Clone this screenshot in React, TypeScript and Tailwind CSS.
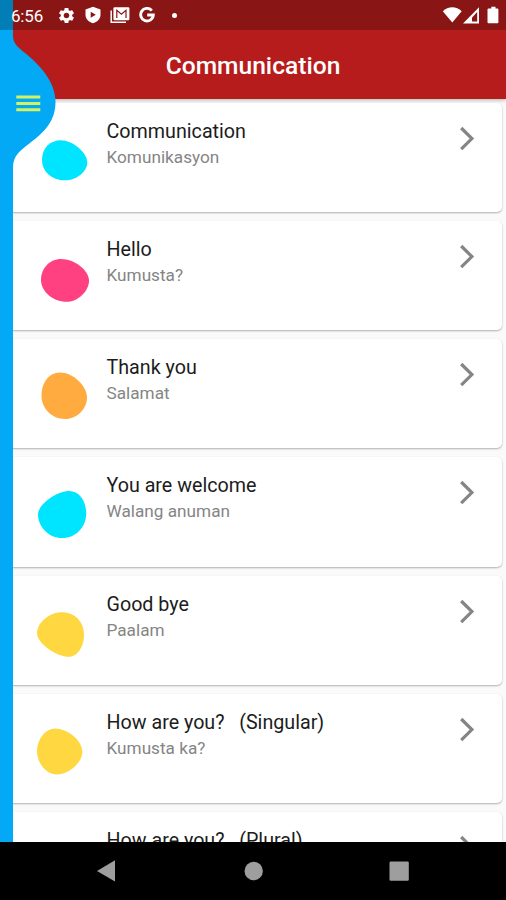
import { MdSettings } from "react-icons/md"

type Phrase = {
  title: string
  translation?: string
  color: string
  blob: string
}

const phrases: Phrase[] = [
  {
    title: "Communication",
    translation: "Komunikasyon",
    color: "#00e5ff",
    blob: "M42 57C42 45 50 37.3 61 37.3C72 37.3 87.3 49 87.3 60C87.3 68 77 77.3 65 77.3C51 77.3 42 68 42 57Z",
  },
  {
    title: "Hello",
    translation: "Kumusta?",
    color: "#ff4081",
    blob: "M41 58.8C41 47 50 38.1 61 38.1C74 38.1 89 49 89 59.8C89 70 78 80.8 67 80.8C52 80.8 41 70 41 58.8Z",
  },
  {
    title: "Thank you",
    translation: "Salamat",
    color: "#ffab40",
    blob: "M41.5 56.6C41.5 45 48 33.6 60 33.6C73 33.6 87 47 87 58.5C87 70 77 80 65 80C52 80 41.5 70 41.5 56.6Z",
  },
  {
    title: "You are welcome",
    translation: "Walang anuman",
    color: "#00e5ff",
    blob: "M38 57.5C38 47 57 33.9 69 33.9C80 33.9 86.2 45 86.2 56.5C86.2 70 76 81.1 62 81.1C49 81.1 38 70 38 57.5Z",
  },
  {
    title: "Good bye",
    translation: "Paalam",
    color: "#ffd740",
    blob: "M37 57C37 47 49 36.2 62 36.2C75 36.2 84 46 84 59C84 71 77 80.8 69 80.8C57 80.8 37 68 37 57Z",
  },
  {
    title: "How are you?   (Singular)",
    translation: "Kumusta ka?",
    color: "#ffd740",
    blob: "M37 57C37 46 45 34.5 55 34.5C67 34.5 82.3 46 82.3 58C82.3 69 68 80.5 57 80.5C46 80.5 37 69 37 57Z",
  },
  {
    title: "How are you?   (Plural)",
    color: "#ffd740",
    blob: "M37 57C37 46 45 34.5 55 34.5C67 34.5 82.3 46 82.3 58C82.3 69 68 80.5 57 80.5C46 80.5 37 69 37 57Z",
  },
]

function StatusBar() {
  return (
    <div className="absolute inset-x-0 top-0 z-20 flex h-[30px] items-center bg-black/25 pl-[11px] text-white">
      <span className="w-[33px] pt-[2px] text-[17px] leading-[28px] tracking-[-0.2px]">6:56</span>
      <MdSettings className="ml-[13px] size-[19px]" />
      <svg className="ml-[9px] h-[18px] w-4" viewBox="0 0 16 18">
        <path
          d="M8 .8L15.5 3.6V9C15.5 13 12 16 8 17.2C4 16 .5 13 .5 9V3.6ZM5.7 5.8V11.8L10.8 8.8Z"
          fill="currentColor"
          fillRule="evenodd"
        />
      </svg>
      <svg className="ml-[9px] h-[18px] w-5" viewBox="0 0 20 18" fill="none">
        <path d="M1.2 4.5V16.2H16" stroke="currentColor" strokeWidth="1.5" />
        <rect x="3.4" y="1.2" width="16" height="13" rx="1.2" fill="currentColor" />
        <path d="M6.8 12V4.4L11.4 8.3L16 4.4V12" stroke="#891515" strokeWidth="1.2" />
      </svg>
      <svg className="ml-[9px] h-4 w-4" viewBox="0 0 16 16" fill="none">
        <path d="M12.8 3.6A6.3 6.3 0 1 0 14.3 8H8.2" stroke="currentColor" strokeWidth="2.9" />
      </svg>
      <span className="ml-[17px] size-[5px] rounded-full bg-white" />
      <svg className="mr-[7px] ml-auto h-[18px] w-[57px]" viewBox="0 0 57 18">
        <path d="M.8 5.2C6 -.2 14.5 -.2 19.7 5.2L10.3 16.6Z" fill="currentColor" />
        <path d="M37 1.3V17.5H21Z" fill="currentColor" />
        <path d="M35.2 6L30 11.4V15.4H35.2Z" fill="#891515" />
        <path
          d="M47.5 2.4H49.3V.8H53.5V2.4H55.2C56 2.4 56.4 2.9 56.4 3.6V16C56.4 16.8 56 17.3 55.2 17.3H46.8C46 17.3 45.5 16.8 45.5 16V3.6C45.5 2.9 46 2.4 46.8 2.4Z"
          fill="currentColor"
        />
      </svg>
    </div>
  )
}

function DrawerHandle() {
  return (
    <svg className="absolute top-0 left-0 z-10 h-[842px] w-14" viewBox="0 0 56 842">
      <path
        d="M0 0H13V36C13 44 19 48 25 53C40 65 55.5 82 55.5 102C55.5 122 43 133 30 143C20 151 13 155 13 168V842H0Z"
        fill="#03a9f4"
      />
      <path d="M16.3 97H40.3M16.3 103.5H40.3M16.3 109.7H40.3" stroke="#d4f15f" strokeWidth="2.9" />
    </svg>
  )
}

function PhraseCard({ title, translation, color, blob }: Phrase) {
  return (
    <li className="flex h-[109.2px] shrink-0 rounded-[5px] bg-white shadow-[0_1px_2px_rgba(0,0,0,0.3)]">
      <svg className="h-[109px] w-[102.5px] shrink-0" viewBox="4 0 102.5 109">
        <path d={blob} fill={color} />
      </svg>
      <div className="flex-1 pt-[16px]">
        <p className="text-[19.7px] leading-[25px] whitespace-pre text-[#1c1c1c]">{title}</p>
        {translation && <p className="text-[17.2px] leading-[26px] text-[#858585]">{translation}</p>}
      </div>
      <svg className="mt-[23px] mr-[26px] h-[25px] w-[18px]" viewBox="0 0 18 25" fill="none">
        <path d="M3.2 2L13.9 12.6L3.2 23.2" stroke="#858585" strokeWidth="3.2" />
      </svg>
    </li>
  )
}

function NavigationBar() {
  return (
    <nav className="flex h-[58px] shrink-0 items-center bg-black text-[#9e9e9e]">
      <svg className="h-[58px] w-full" viewBox="0 0 506 58" fill="currentColor">
        <path d="M97 29L115 18.3V39.5Z" />
        <circle cx="253.7" cy="29" r="9.2" />
        <rect x="389.5" y="19.6" width="19.3" height="19.2" rx="1.2" />
      </svg>
    </nav>
  )
}

export default function App() {
  return (
    <div className="relative flex h-[900px] w-[506px] flex-col overflow-hidden bg-[#fafafa] font-['Roboto',sans-serif]">
      <StatusBar />
      <DrawerHandle />
      <header className="flex h-[98.5px] shrink-0 items-center justify-center bg-[#b71c1c] pt-[33.5px] shadow-[0_1px_4px_rgba(0,0,0,0.3)]">
        <h1 className="text-[24.6px] leading-[30px] font-medium text-white">Communication</h1>
      </header>
      <ul className="flex min-h-0 flex-1 flex-col gap-[9px] overflow-hidden px-1 pt-[4.4px]">
        {phrases.map((phrase) => (
          <PhraseCard key={phrase.title} {...phrase} />
        ))}
      </ul>
      <NavigationBar />
    </div>
  )
}
